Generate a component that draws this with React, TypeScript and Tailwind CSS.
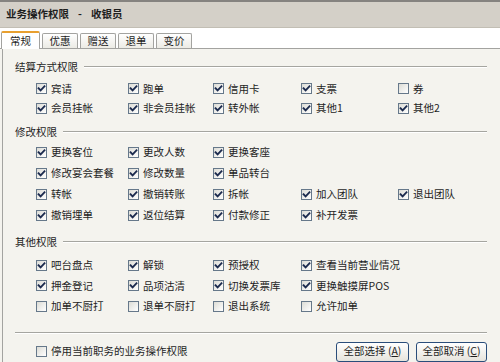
import React from "react";

const FONT = '"Noto Sans CJK SC", "Noto Sans", sans-serif';

function Box({ checked }: { checked: boolean }) {
  return (
    <span className="w-[11px] h-[11px] shrink-0 border border-[#66788a] bg-gradient-to-br from-[#dcdcd6] to-[#ffffff] flex items-center justify-center">
      {checked && (
        <svg width="9" height="9" viewBox="0 0 9 9">
          <path d="M1.5 4.2 L3.6 6.4 L7.5 2.2" fill="none" stroke="#1b2a4e" strokeWidth="1.8" strokeLinecap="square" />
        </svg>
      )}
    </span>
  );
}

function Item({ label, checked = true }: { label: string; checked?: boolean }) {
  return (
    <div className="flex items-center gap-[4px] h-full">
      <Box checked={checked} />
      <span className="leading-none whitespace-nowrap">{label}</span>
    </div>
  );
}

function Header({ title }: { title: string }) {
  return (
    <div className="flex items-center h-[14px] pr-[13px]">
      <span className="leading-none whitespace-nowrap">{title}</span>
      <div className="flex-1 ml-[6px] border-t border-[#a5a5a0] border-b border-b-white" />
    </div>
  );
}

function Grid({ rows, rowH }: { rows: (string | [string, boolean] | null)[][]; rowH: string }) {
  return (
    <div className="ml-[21px] grid grid-cols-[92px_85px_88px_97px_1fr]">
      {rows.flatMap((r, ri) =>
        r.map((c, ci) => (
          <div key={ri + "-" + ci} className={rowH}>
            {c === null ? null : typeof c === "string" ? <Item label={c} /> : <Item label={c[0]} checked={c[1]} />}
          </div>
        ))
      )}
    </div>
  );
}

export default function App() {
  const tabs = ["优惠", "赠送", "退单", "变价"];
  return (
    <div className="w-[500px] h-[362px] overflow-hidden bg-[#f4f3ee] text-[#1e1e1e] text-[10.5px] flex flex-col" style={{ fontFamily: FONT }}>
      <div className="h-[2px] bg-[#858380]" />
      <div className="h-[26px] bg-[#d4d0c8] border-b border-[#c2beb4] flex items-center pl-[6px] font-bold text-[10.5px] leading-none whitespace-pre">
        <span>业务操作权限</span>
        <span className="mx-[9px]">-</span>
        <span>收银员</span>
      </div>
      <div className="h-[21px] bg-white border-b border-[#a3a3a0] flex items-end pl-[1px] gap-[2px]">
        <div className="relative z-10 -mb-px h-[18px] w-[39px] bg-white border-x border-[#a3a3a0] border-t-2 border-t-[#e8a030] rounded-t-[2px] flex items-center justify-center leading-none pt-[1px]">
          常规
        </div>
        {tabs.map((t) => (
          <div key={t} className="h-[15px] w-[36px] border border-b-0 border-[#a3a3a0] rounded-t-[2px] bg-gradient-to-b from-white to-[#ecebe5] flex items-center justify-center leading-none pt-[1px]">
            {t}
          </div>
        ))}
      </div>
      <div className="flex-1 ml-[2px] border-l border-[#a3a3a0] pl-[12px] flex flex-col">
        <div className="mt-[11px]">
          <Header title="结算方式权限" />
        </div>
        <div className="mt-[5px]">
          <Grid
            rowH="h-[19.5px]"
            rows={[
              ["宾请", "跑单", "信用卡", "支票", ["券", false]],
              ["会员挂帐", "非会员挂帐", "转外帐", "其他1", "其他2"],
            ]}
          />
        </div>
        <div className="mt-[7px]">
          <Header title="修改权限" />
        </div>
        <div className="mt-[3px]">
          <Grid
            rowH="h-[21px]"
            rows={[
              ["更换客位", "更改人数", "更换客座", null, null],
              ["修改宴会套餐", "修改数量", "单品转台", null, null],
              ["转帐", "撤销转账", "拆帐", "加入团队", "退出团队"],
              ["撤销埋单", "返位结算", "付款修正", "补开发票", null],
            ]}
          />
        </div>
        <div className="mt-[9px]">
          <Header title="其他权限" />
        </div>
        <div className="mt-[6px]">
          <div className="ml-[21px] grid grid-cols-[92px_85px_88px_1fr]">
            {[
              ["吧台盘点", true],
              ["解锁", true],
              ["预授权", true],
              ["查看当前营业情况", true],
              ["押金登记", true],
              ["品项沽清", true],
              ["切换发票库", true],
              ["更换触摸屏POS", true],
              ["加单不厨打", false],
              ["退单不厨打", false],
              ["退出系统", false],
              ["允许加单", false],
            ].map(([l, c]) => (
              <div key={l as string} className="h-[20.5px]">
                <Item label={l as string} checked={c as boolean} />
              </div>
            ))}
          </div>
        </div>
        <div className="mt-[15px] mr-[13px] border-t border-[#a5a5a0] border-b border-b-white" />
        <div className="flex items-center mt-[8px] mr-[13px] h-[20px]">
          <div className="ml-[21px] flex-1">
            <Item label="停用当前职务的业务操作权限" checked={false} />
          </div>
          <button className="w-[73px] h-[20px] border border-[#2a4d7a] rounded-[3px] bg-gradient-to-b from-white to-[#e6e4dc] leading-none text-[10.5px] mr-[7px] whitespace-pre">
            全部选择 (<span className="underline">A</span>)
          </button>
          <button className="w-[71px] h-[20px] border border-[#2a4d7a] rounded-[3px] bg-gradient-to-b from-white to-[#e6e4dc] leading-none text-[10.5px] whitespace-pre">
            全部取消 (<span className="underline">C</span>)
          </button>
        </div>
      </div>
    </div>
  );
}
